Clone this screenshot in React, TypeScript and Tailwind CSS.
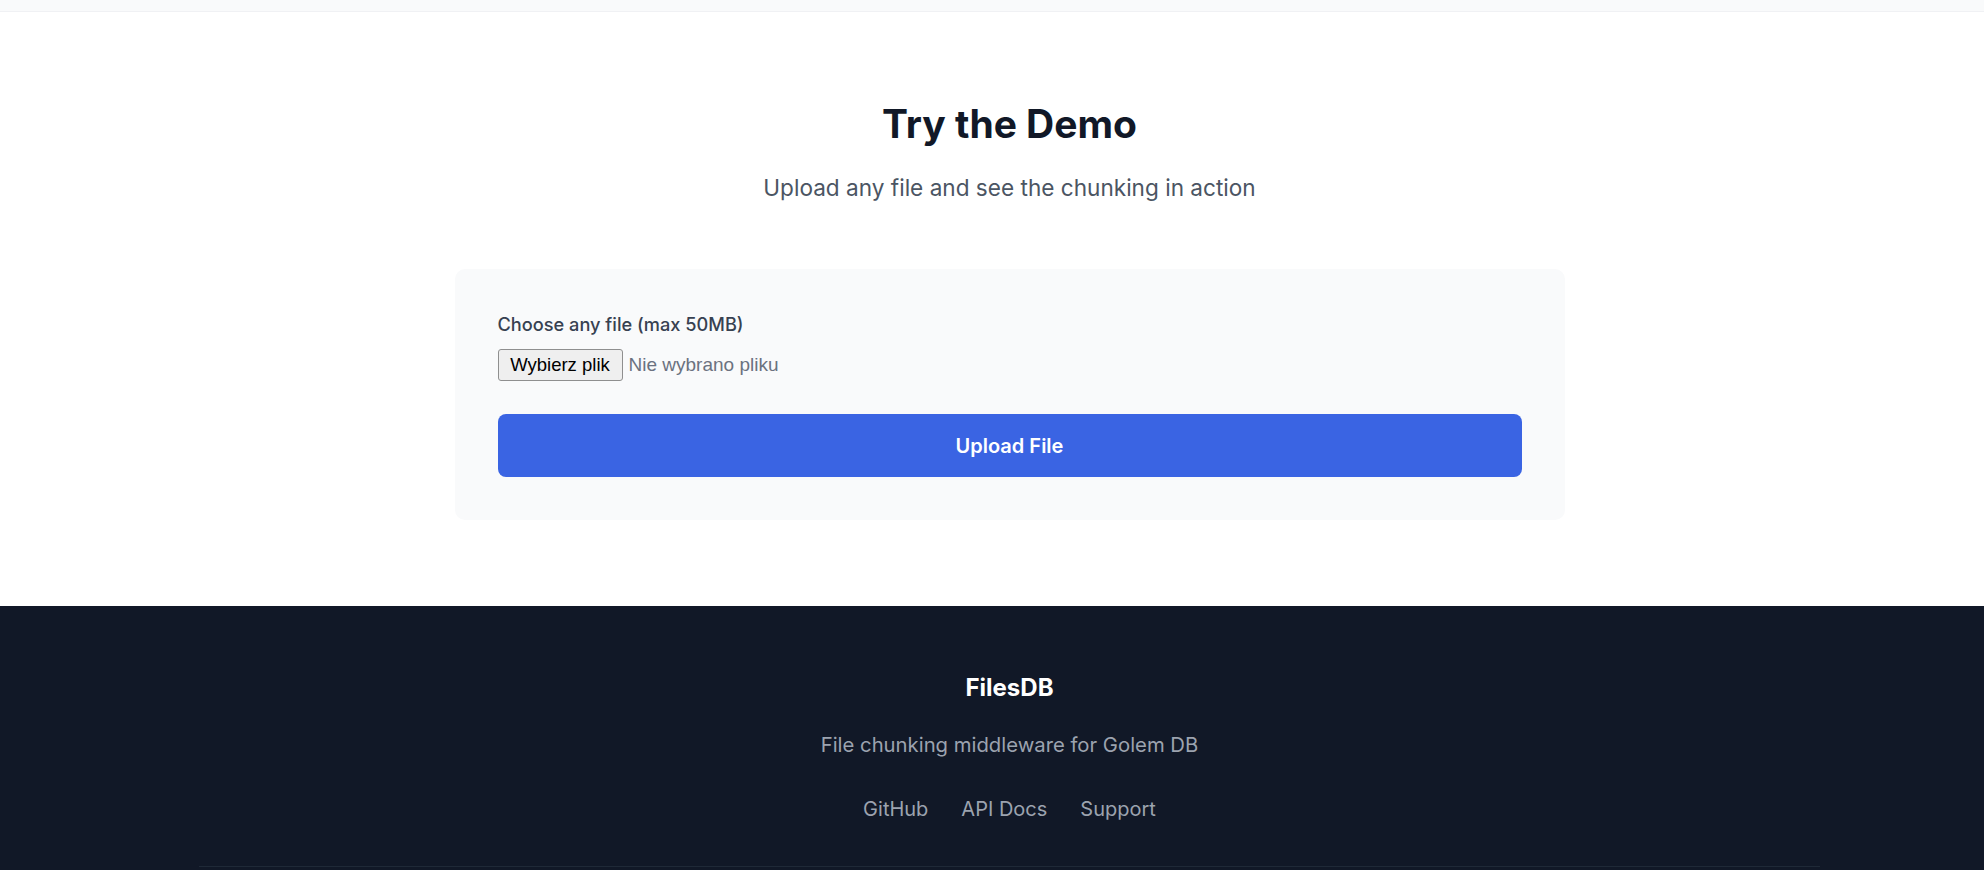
const links = ["GitHub", "API Docs", "Support"];

export default function App() {
  return (
    <div className="min-h-screen bg-white font-['Inter','Noto_Sans',sans-serif]">
      {/* end of previous section */}
      <div className="h-[12px] bg-[#f9fafb] border-b border-[#f0f1f4]" />

      <section className="pt-[88px] pb-[86px] pl-[35px]">
        <div className="text-center">
          <h2 className="text-[39px] leading-[48px] font-bold text-[#111827]">Try the Demo</h2>
          <p className="mt-[25px] text-[22.6px] leading-[30px] text-[#4b5563]">
            Upload any file and see the chunking in action
          </p>
        </div>

        <div className="mt-[66px] mx-auto w-[1110px] bg-[#f9fafb] rounded-[10px] px-[43px] pt-[43px] pb-[43px]">
          <label className="block text-[18.2px] leading-[25px] font-medium text-[#374151]">
            Choose any file (max 50MB)
          </label>
          <div className="mt-[12px] flex items-center h-[32px]">
            <button className="h-[32px] w-[125px] bg-[#efefef] border border-[#8f8f8f] rounded-[3px] text-[18.5px] text-black font-['Liberation_Sans',sans-serif]">
              Wybierz plik
            </button>
            <span className="ml-[6px] text-[19px] text-[#6b7280] font-['Liberation_Sans',sans-serif]">
              Nie wybrano pliku
            </span>
          </div>
          <button className="mt-[33px] w-full h-[63px] rounded-[8px] bg-[#3a64e3] text-white text-[20px] font-semibold">
            Upload File
          </button>
        </div>
      </section>

      <footer className="bg-[#111827] pt-[66px]">
        <div className="pl-[35px] text-center">
          <h3 className="text-[24px] leading-[32px] font-bold text-white">FilesDB</h3>
          <p className="mt-[27px] text-[20.3px] leading-[28px] text-[#9ca3af]">
            File chunking middleware for Golem DB
          </p>
          <div className="mt-[36px] flex justify-center gap-[33px]">
            {links.map((l) => (
              <a key={l} href="#" className="text-[20px] leading-[28px] text-[#9ca3af] hover:text-white">
                {l}
              </a>
            ))}
          </div>
        </div>
        <div className="pl-[35px] mt-[43px]">
          <div className="mx-auto w-[1621px] border-t border-[#1f2937] h-[40px]" />
        </div>
      </footer>
    </div>
  );
}
